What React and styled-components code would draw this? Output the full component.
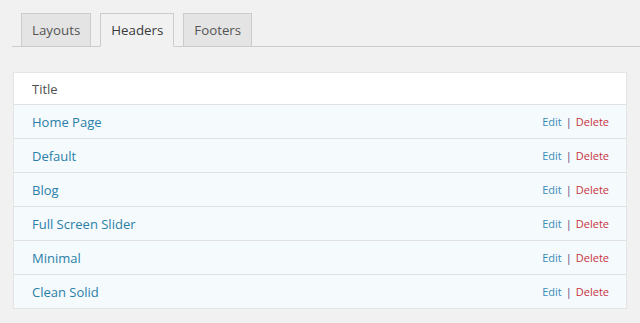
import React from "react";
import styled, { createGlobalStyle } from "styled-components";

const Global = createGlobalStyle`
  html, body { margin: 0; padding: 0; background: #f1f1f1; }
  body { font-family: "Open Sans", "Liberation Sans", sans-serif; color: #444; }
`;

const Page = styled.div`
  padding: 13px 15px 0 12px;
  box-sizing: border-box;
  width: 640px;
`;

const TabBar = styled.nav`
  display: flex;
  align-items: flex-end;
  border-bottom: 1px solid #ccc;
  padding-left: 9px;
  margin-right: -15px;
  gap: 9px;
`;

const Tab = styled.a`
  display: block;
  padding: 4px 10px 4px;
  font-size: 13.3px;
  font-weight: 400;
  line-height: 24px;
  color: ${(p) => (p.$active ? "#3a3a3a" : "#555")};
  background: ${(p) => (p.$active ? "#f1f1f1" : "#e4e4e4")};
  border: 1px solid #ccc;
  border-bottom: ${(p) => (p.$active ? "1px solid #f1f1f1" : "none")};
  margin-bottom: ${(p) => (p.$active ? "-1px" : "0")};
  text-decoration: none;
`;

const Table = styled.div`
  margin-top: 25px;
  margin-left: 1px;
  width: 612px;
  background: #fff;
  border: 1px solid #e5e5e5;
  box-shadow: 0 1px 1px rgba(0, 0, 0, 0.04);
`;

const HeadRow = styled.div`
  display: flex;
  align-items: center;
  height: 31px;
  padding: 0 18px;
  font-size: 13px;
  color: #50504f;
  border-bottom: 1px solid #e1e1e1;
`;

const Row = styled.div`
  display: flex;
  align-items: center;
  justify-content: space-between;
  height: 33px;
  padding: 0 17px 0 18px;
  background: #f5fafd;
  border-bottom: ${(p) => (p.$last ? "none" : "1px solid #e1e1e1")};
`;

const RowTitle = styled.a`
  font-size: 13px;
  font-weight: 400;
  color: #2a7fa8;
  text-decoration: none;
`;

const Actions = styled.div`
  font-size: 11px;
  color: #555;
  display: flex;
  gap: 4px;
`;

const ActionLink = styled.a`
  color: ${(p) => (p.$danger ? "#c6343e" : "#3c8cb8")};
  text-decoration: none;
`;

const Sep = styled.span`
  color: #5a3f7a;
`;

const rows = ["Home Page", "Default", "Blog", "Full Screen Slider", "Minimal", "Clean Solid"];

export default function App() {
  return (
    <>
      <Global />
      <Page>
        <TabBar>
          <Tab>Layouts</Tab>
          <Tab $active>Headers</Tab>
          <Tab>Footers</Tab>
        </TabBar>
        <Table>
          <HeadRow>Title</HeadRow>
          {rows.map((r, i) => (
            <Row key={r} $last={i === rows.length - 1}>
              <RowTitle>{r}</RowTitle>
              <Actions>
                <ActionLink>Edit</ActionLink>
                <Sep>|</Sep>
                <ActionLink $danger>Delete</ActionLink>
              </Actions>
            </Row>
          ))}
        </Table>
      </Page>
    </>
  );
}
